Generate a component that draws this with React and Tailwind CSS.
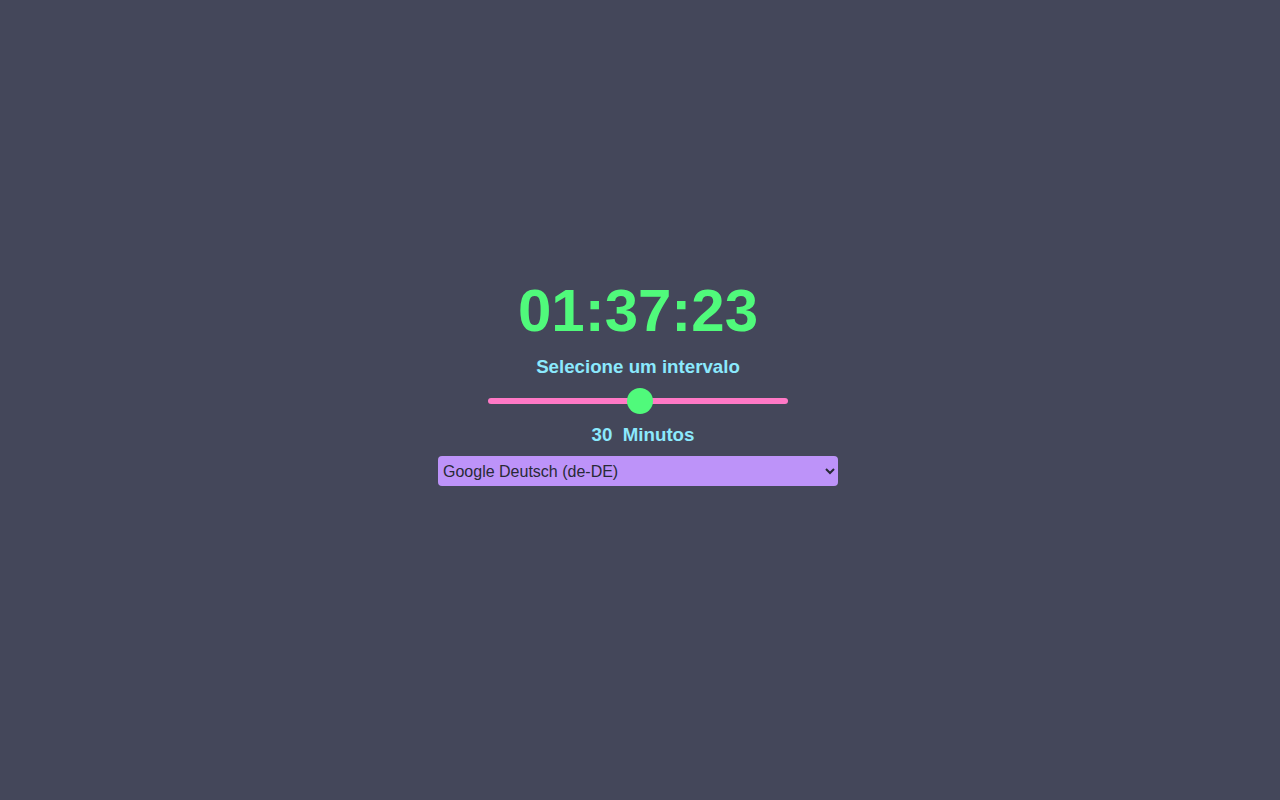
import { useState } from "react";

export default function App() {
  const [minutos, setMinutos] = useState(30);
  const [voz, setVoz] = useState("de-DE");

  return (
    <div className="min-h-screen bg-[#44475a] flex flex-col items-center pt-[281px] pr-1 font-['Liberation_Sans',Arial,sans-serif]">
      {/* relogio */}
      <h1 className="text-6xl leading-none font-bold text-[#50fa7b]">01:37:23</h1>

      <h3 className="mt-[12px] text-[18.72px] leading-7 font-bold text-[#8be9fd]">Selecione um intervalo</h3>

      {/* slider */}
      <div className="mt-[7px] h-[26px] flex items-center">
        <input
          type="range"
          min="0"
          max="59"
          value={minutos}
          onChange={(e) => setMinutos(Number(e.target.value))}
          className="w-[300px] h-[6px] appearance-none rounded-full bg-[#ff79c6] outline-none cursor-pointer [&::-webkit-slider-thumb]:appearance-none [&::-webkit-slider-thumb]:w-[26px] [&::-webkit-slider-thumb]:h-[26px] [&::-webkit-slider-thumb]:rounded-full [&::-webkit-slider-thumb]:bg-[#50fa7b]"
        />
      </div>

      <h3 className="mt-[7px] pl-[10px] text-[18.72px] leading-7 font-bold text-[#8be9fd]">
        {minutos}&nbsp;&nbsp;Minutos
      </h3>

      {/* vozes */}
      <select
        value={voz}
        onChange={(e) => setVoz(e.target.value)}
        className="mt-[7px] w-[400px] h-[30px] pl-[1px] rounded bg-[#bd93f9] text-[#282a36] text-base outline-none font-['Liberation_Sans',Arial,sans-serif]"
      >
        <option value="de-DE">Google Deutsch (de-DE)</option>
        <option value="en-US">Google US English (en-US)</option>
        <option value="pt-BR">Google português do Brasil (pt-BR)</option>
      </select>
    </div>
  );
}
